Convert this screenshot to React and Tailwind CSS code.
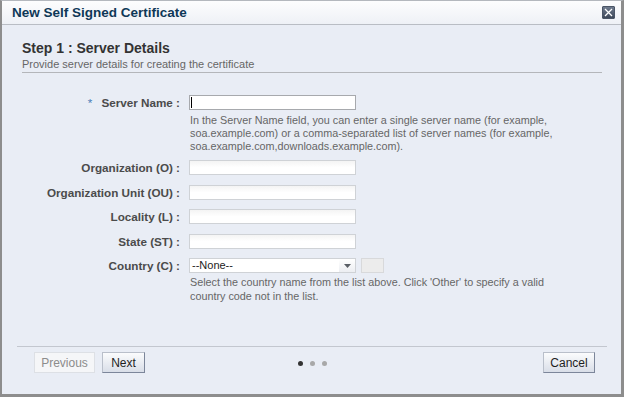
import React from "react";

const font = { fontFamily: '"Liberation Sans", Arial, sans-serif' };

function Field({ label, top }) {
  return (
    <div className={`flex items-center ${top}`}>
      <div className="w-[158px] flex justify-end items-center text-[11.7px] font-bold text-[#4b4b4b] leading-[15px] whitespace-nowrap">
        <span>{label}</span>
      </div>
      <div className="ml-[9px] w-[167px] h-[15px] border border-[#cfd2d6] bg-gradient-to-b from-[#f4f4f4] via-white to-white" />
    </div>
  );
}

export default function App() {
  return (
    <div
      style={font}
      className="w-[624px] h-[397px] flex flex-col bg-[#e9edf5] border-l-2 border-r-[3px] border-b-[3px] border-t border-l-[#8d8d8d] border-r-[#8d8d8d] border-b-[#8d8d8d] border-t-[#b4b8be] overflow-hidden"
    >
      {/* Header */}
      <div className="h-[24px] shrink-0 flex items-center justify-between pl-[10px] pr-[6px] bg-gradient-to-b from-[#fdfdfe] to-[#eef1f6] border-b border-[#b9bdc4]">
        <div className="text-[13.5px] font-bold text-[#0f3857] leading-[16px]">New Self Signed Certificate</div>
        <div className="w-[13px] h-[13px] rounded-[1px] bg-gradient-to-b from-[#6f7b8e] to-[#3d4859] border border-[#4a5566] flex items-center justify-center">
          <svg width="9" height="9" viewBox="0 0 9 9">
            <path d="M1 1 L8 8 M8 1 L1 8" stroke="#ffffff" strokeWidth="1.3" />
          </svg>
        </div>
      </div>

      {/* Body */}
      <div className="flex-1 flex flex-col">
        <div className="pl-[20px] pr-[19px] pt-[15px]">
          <div className="border-b border-[#b4b6ba]">
            <div className="text-[14px] font-bold text-[#333333] leading-[16px]">Step 1 : Server Details</div>
            <div className="mt-[2px] h-[14px] text-[11px] text-[#666666] leading-[13px]">
              Provide server details for creating the certificate
            </div>
          </div>
        </div>

        <div className="pl-[20px] pt-[22px]">
          {/* Server name */}
          <div className="flex items-center">
            <div className="w-[158px] flex justify-end items-center text-[11.7px] font-bold text-[#4b4b4b] leading-[15px] whitespace-nowrap">
              <span className="text-[#4a7bb5] font-normal mr-[9px]">*</span>
              <span>Server Name :</span>
            </div>
            <div className="ml-[9px] w-[167px] h-[15px] border border-[#a7a9ad] bg-white flex items-center pl-[1px]">
              <div className="w-px h-[11px] bg-black" />
            </div>
          </div>
          <div className="ml-[168px] mt-[4px] text-[10.8px] leading-[13px] text-[#666666] w-[400px]">
            In the Server Name field, you can enter a single server name (for example,
            <br />
            soa.example.com) or a comma-separated list of server names (for example,
            <br />
            soa.example.com,downloads.example.com).
          </div>

          <Field label="Organization (O) :" top="mt-[7px]" />
          <Field label="Organization Unit (OU) :" top="mt-[10px]" />
          <Field label="Locality (L) :" top="mt-[9px]" />
          <Field label="State (ST) :" top="mt-[10px]" />

          {/* Country */}
          <div className="flex items-center mt-[9px]">
            <div className="w-[158px] flex justify-end text-[11.7px] font-bold text-[#4b4b4b] leading-[15px] whitespace-nowrap">
              Country (C) :
            </div>
            <div className="ml-[9px] w-[167px] h-[15px] border border-[#cfd2d6] bg-white flex items-center">
              <div className="flex-1 pl-[2px] text-[11px] leading-[13px] text-[#222222]">--None--</div>
              <div className="w-[16px] h-full flex items-center justify-center bg-gradient-to-b from-white to-[#eceef2]">
                <svg width="7" height="4" viewBox="0 0 7 4">
                  <path d="M0 0 L7 0 L3.5 4 Z" fill="#5a5f66" />
                </svg>
              </div>
            </div>
            <div className="ml-[5px] w-[23px] h-[15px] border border-[#d8d9db] bg-[#ececec]" />
          </div>
          <div className="ml-[168px] mt-[3px] text-[10.8px] leading-[13.5px] text-[#666666]">
            Select the country name from the list above. Click 'Other' to specify a valid
            <br />
            country code not in the list.
          </div>
        </div>

        {/* Footer */}
        <div className="mt-auto mx-[15px] mr-[14px] h-[48px] border-t border-[#c3c7cf] grid grid-cols-[1fr_auto_1fr] items-start pt-[5px]">
          <div className="flex pl-[17px] gap-[7px]">
            <div className="w-[61px] h-[21px] border border-[#dde0e5] bg-[#f5f6f8] text-[12px] text-[#8c8c8c] flex items-center justify-center">
              Previous
            </div>
            <div className="w-[43px] h-[21px] border border-[#b9bfca] border-b-[#7c869a] border-r-[#7c869a] bg-gradient-to-b from-[#fbfcfd] to-[#d9dee8] text-[12px] text-[#1e1e1e] flex items-center justify-center">
              Next
            </div>
          </div>
          <div className="flex items-center gap-[7px] h-[21px] mt-[1px]">
            <div className="w-[5px] h-[5px] rounded-full bg-[#333333]" />
            <div className="w-[5px] h-[5px] rounded-full bg-[#a8a8a8]" />
            <div className="w-[5px] h-[5px] rounded-full bg-[#a8a8a8]" />
          </div>
          <div className="flex justify-end pr-[12px]">
            <div className="w-[52px] h-[21px] border border-[#b9bfca] border-b-[#7c869a] border-r-[#7c869a] bg-gradient-to-b from-[#fbfcfd] to-[#d9dee8] text-[12px] text-[#1e1e1e] flex items-center justify-center">
              Cancel
            </div>
          </div>
        </div>
      </div>
    </div>
  );
}
